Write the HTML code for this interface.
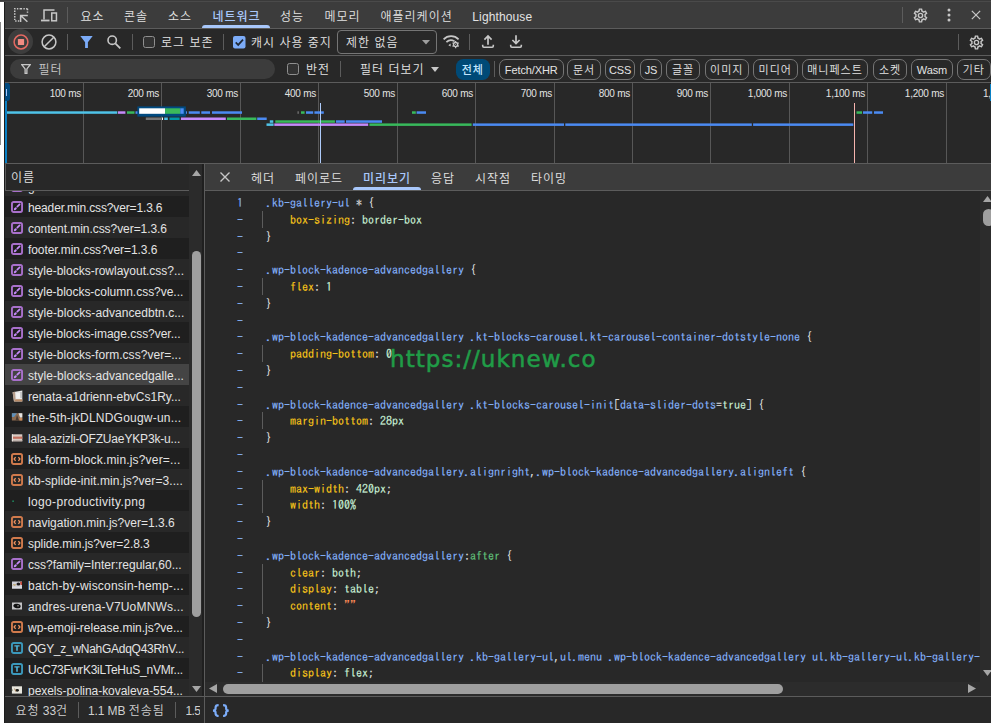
<!DOCTYPE html>
<html lang="ko"><head><meta charset="utf-8"><title>DevTools</title>
<style>
*{box-sizing:border-box;margin:0;padding:0}
html,body{width:991px;height:723px;overflow:hidden;background:#282828}
body{position:relative;font:12px "Liberation Sans","Noto Sans CJK KR",sans-serif;color:#e3e3e3;-webkit-font-smoothing:antialiased}
.abs{position:absolute}
.ko{font-family:"Liberation Sans","Noto Sans CJK KR",sans-serif;font-size:12px;font-weight:350;letter-spacing:1px;white-space:nowrap;line-height:16px;margin-top:0.5px}
.la{font-family:"Liberation Sans",sans-serif;font-size:12px;white-space:nowrap;line-height:16px;letter-spacing:-0.2px}
.n{letter-spacing:-0.1px}
.sep{position:absolute;width:1px;background:#5c5c5c}
.hl{position:absolute;height:1px;background:#5c5c5c;left:5px;right:0}
.tab{position:absolute;top:8px;color:#e3e3e3}
.pill{position:absolute;top:59px;height:21px;border:1px solid #757575;border-radius:7px;text-align:center;line-height:21px;color:#e3e3e3}
.pill.ko{font-size:11px;margin-top:0}.pill.la{font-size:11px;letter-spacing:-0.1px}
.row{position:absolute;left:5px;width:184px;height:21px;overflow:hidden}
.row .ic{position:absolute;left:6px;top:4.5px;width:12px;height:12px}
.row span{position:absolute;left:23px;top:3.6px;white-space:pre;font:12px/16px "Liberation Sans",sans-serif;color:#e3e3e3}
.d{background:#1f1f1f}
.code{position:absolute;left:205px;top:191px;width:775px;height:491px;overflow:hidden;background:#282828}
.ln{position:absolute;left:0;height:16.8px;width:774px;font:12px/16.8px "IPAGothic","Liberation Mono",monospace;white-space:pre;-webkit-text-stroke:0.12px}
.ln i{font-style:normal;position:absolute;left:20px;width:18px;text-align:right;color:#86b0f2}
.ln b{font-weight:normal;position:absolute;left:61px}
.s{color:#86b4ff}.p{color:#fcc818}.v{color:#ccf3d8}.q{color:#fe8d59}.g{color:#62c37c}.w{color:#dcdcdc}
.gd{position:absolute;left:57px;width:1px;background:#5c5c5c}
</style></head><body>

<div class="abs" style="left:0;top:0;width:4px;height:723px;background:#fff"></div>
<div class="abs" style="left:0;top:22px;width:1px;height:123px;background:#8a8a8a"></div>
<div class="abs" style="left:4px;top:0;width:1px;height:723px;background:#1d1d1d"></div>
<div class="abs" style="left:0;top:0;width:991px;height:1px;background:#3a3a3a"></div>
<div class="abs" style="left:0;top:1px;width:991px;height:1px;background:#4a4a4a"></div>
<div class="abs" style="left:5px;top:2px;width:986px;height:26px;background:#3c3c3c"></div>
<div class="hl" style="top:28px"></div>
<div class="hl" style="top:55px"></div>
<div class="hl" style="top:82px"></div>
<svg class="abs" style="left:13px;top:7px" width="16" height="16" viewBox="0 0 16 16"><path d="M8 1.75 H1.75 V14 H7" fill="none" stroke="#c7c7c7" stroke-width="1.5" stroke-dasharray="1.4 1.3"/><path d="M14.5 1.75 H8 M14.5 1.75 V7" fill="none" stroke="#c7c7c7" stroke-width="1.5" stroke-dasharray="1.4 1.3"/><path d="M7.6 15 V8.5 H14.8 M7.9 8.8 L14.4 14.8" fill="none" stroke="#c7c7c7" stroke-width="1.5"/></svg>
<svg class="abs" style="left:40px;top:7.5px" width="18" height="16" viewBox="0 0 18 16"><path d="M14.5 2 H4 V11.5" fill="none" stroke="#c7c7c7" stroke-width="1.5"/><path d="M1 12.5 H9.5" stroke="#c7c7c7" stroke-width="1.8"/><rect x="11.75" y="5" width="4.7" height="7.8" fill="none" stroke="#c7c7c7" stroke-width="1.5"/></svg>
<div class="sep" style="left:67px;top:7px;height:16px"></div>
<div class="tab ko" style="left:80.5px">요소</div>
<div class="tab ko" style="left:124px">콘솔</div>
<div class="tab ko" style="left:168px">소스</div>
<div class="tab ko" style="left:212.5px;color:#a8c7fa;font-weight:500">네트워크</div>
<div class="tab ko" style="left:280px">성능</div>
<div class="tab ko" style="left:324.5px">메모리</div>
<div class="tab ko" style="left:380.5px">애플리케이션</div>
<div class="tab la" style="left:472.3px;top:9px;font-size:12px;letter-spacing:0.12px">Lighthouse</div>
<div class="abs" style="left:202px;top:25px;width:68px;height:3px;background:#a8c7fa;border-radius:3px 3px 0 0"></div>
<div class="sep" style="left:902px;top:7px;height:16px"></div>
<svg class="abs" style="left:912.3px;top:6.5px" width="17" height="17" viewBox="0 0 24 24"><path fill="#c7c7c7" fill-rule="evenodd" d="M19.43 12.98c.04-.32.07-.64.07-.98s-.03-.66-.07-.98l2.11-1.65a.5.5 0 0 0 .12-.64l-2-3.46a.5.5 0 0 0-.61-.22l-2.49 1a7.3 7.3 0 0 0-1.69-.98l-.38-2.65A.49.49 0 0 0 14 2h-4a.49.49 0 0 0-.49.42l-.38 2.65c-.61.25-1.17.59-1.69.98l-2.49-1a.49.49 0 0 0-.61.22l-2 3.46a.49.49 0 0 0 .12.64l2.11 1.65c-.04.32-.07.65-.07.98s.03.66.07.98l-2.11 1.65a.5.5 0 0 0-.12.64l2 3.46c.12.22.39.3.61.22l2.49-1c.52.4 1.08.73 1.69.98l.38 2.65c.03.24.24.42.49.42h4c.25 0 .46-.18.49-.42l.38-2.65c.61-.25 1.17-.59 1.69-.98l2.49 1c.23.09.49 0 .61-.22l2-3.46a.5.5 0 0 0-.12-.64l-2.11-1.65zM17.45 11.27c.04.31.05.52.05.73s-.02.43-.05.73l-.14 1.13.89.7 1.08.84-.7 1.21-1.27-.51-1.04-.42-.9.68c-.43.32-.84.56-1.25.73l-1.06.43-.16 1.13-.2 1.35h-1.4l-.19-1.35-.16-1.13-1.06-.43c-.43-.18-.83-.41-1.23-.71l-.91-.7-1.06.43-1.27.51-.7-1.21 1.08-.84.89-.7-.14-1.13c-.03-.31-.05-.54-.05-.74s.02-.43.05-.73l.14-1.13-.89-.7-1.08-.84.7-1.21 1.27.51 1.04.42.9-.68c.43-.32.84-.56 1.25-.73l1.06-.43.16-1.13.2-1.35h1.39l.19 1.35.16 1.13 1.06.43c.43.18.83.41 1.23.71l.91.7 1.06-.43 1.27-.51.7 1.21-1.07.85-.89.7.14 1.13zM12 8a4 4 0 1 0 0 8 4 4 0 0 0 0-8zm0 6a2 2 0 1 1 0-4 2 2 0 0 1 0 4z"/></svg>
<svg class="abs" style="left:946px;top:7px" width="6" height="16" viewBox="0 0 6 16"><circle cx="3" cy="3" r="1.5" fill="#c7c7c7"/><circle cx="3" cy="8" r="1.5" fill="#c7c7c7"/><circle cx="3" cy="13" r="1.5" fill="#c7c7c7"/></svg>
<svg class="abs" style="left:971px;top:10px" width="10" height="10" viewBox="0 0 12 12"><path d="M1 1 L11 11 M11 1 L1 11" stroke="#c7c7c7" stroke-width="1.5"/></svg>
<div class="abs" style="left:8px;top:29px;width:25px;height:25px;border-radius:50%;background:#3d3d3d"></div>
<svg class="abs" style="left:13px;top:34px" width="16" height="16" viewBox="0 0 16 16"><circle cx="8" cy="8" r="6.9" fill="none" stroke="#e46962" stroke-width="1.5"/><rect x="4.9" y="4.9" width="6.2" height="6.2" rx="0.6" fill="#f28b82"/></svg>
<svg class="abs" style="left:41px;top:34px" width="16" height="16" viewBox="0 0 16 16"><circle cx="8" cy="8" r="6.9" fill="none" stroke="#c7c7c7" stroke-width="1.5"/><path d="M3.2 12.8 L12.8 3.2" stroke="#c7c7c7" stroke-width="1.5"/></svg>
<div class="sep" style="left:67px;top:34px;height:16px"></div>
<svg class="abs" style="left:80px;top:36px" width="13" height="12" viewBox="0 0 13 12"><path d="M0.3 0 H12.7 L7.9 6.2 V12 H5.1 V6.2 Z" fill="#7cacf8"/></svg>
<svg class="abs" style="left:106px;top:34px" width="16" height="16" viewBox="0 0 16 16"><circle cx="6.2" cy="6.2" r="4.2" fill="none" stroke="#c7c7c7" stroke-width="1.6"/><path d="M9.3 9.3 L14.3 14.3" stroke="#c7c7c7" stroke-width="1.8"/></svg>
<div class="sep" style="left:132px;top:34px;height:16px"></div>
<div class="abs" style="left:143px;top:36px;width:12px;height:12px;border:1px solid #8f8f8f;border-radius:2.5px;background:#323232"></div>
<div class="abs ko" style="left:161px;top:34px">로그 보존</div>
<div class="sep" style="left:222.5px;top:34px;height:16px"></div>
<svg class="abs" style="left:232.6px;top:36px" width="13" height="13" viewBox="0 0 13 13"><rect x="0" y="0" width="12.5" height="12.5" rx="2" fill="#7cacf8"/><path d="M2.7 6.4 L5.2 8.9 L10 3.6" fill="none" stroke="#1f2937" stroke-width="1.7"/></svg>
<div class="abs ko" style="left:251px;top:34px">캐시 사용 중지</div>
<div class="abs" style="left:337px;top:30px;width:100px;height:24px;border:1px solid #757575;border-radius:4px"></div>
<div class="abs ko" style="left:346px;top:34px">제한 없음</div>
<svg class="abs" style="left:422px;top:40px" width="8" height="5" viewBox="0 0 8 5"><path d="M0 0 H8 L4 4.6 Z" fill="#9e9e9e"/></svg>
<svg class="abs" style="left:442px;top:33px" width="18" height="16" viewBox="0 0 18 16"><path d="M1.6 6.3 A10.5 10.5 0 0 1 16.6 6.3" fill="none" stroke="#c7c7c7" stroke-width="1.7"/><path d="M4.4 9.2 A6.6 6.6 0 0 1 12.6 8.4" fill="none" stroke="#c7c7c7" stroke-width="1.7"/><path d="M6.4 12.2 L8.6 10.6 V13.4 Z" fill="#c7c7c7"/><circle cx="13.6" cy="11.6" r="2" fill="none" stroke="#c7c7c7" stroke-width="1.5"/><path d="M13.6 8 V15.2 M10.5 9.8 L16.7 13.4 M10.5 13.4 L16.7 9.8" stroke="#c7c7c7" stroke-width="1.3"/><circle cx="13.6" cy="11.6" r="1.3" fill="#282828"/><circle cx="13.6" cy="11.6" r="0.5" fill="#c7c7c7"/></svg>
<div class="sep" style="left:469px;top:34px;height:16px"></div>
<svg class="abs" style="left:481.2px;top:34px" width="14" height="15" viewBox="0 0 14 15"><path d="M7 10.8 V2 M3.4 5.6 L7 2 L10.6 5.6" fill="none" stroke="#c7c7c7" stroke-width="1.7"/><path d="M1.7 10.8 V12 Q1.7 13.2 2.9 13.2 H11.1 Q12.3 13.2 12.3 12 V10.8" fill="none" stroke="#c7c7c7" stroke-width="1.6"/></svg>
<svg class="abs" style="left:509px;top:34px" width="14" height="15" viewBox="0 0 14 15"><path d="M7 1.3 V9.6 M3.4 6 L7 9.6 L10.6 6" fill="none" stroke="#c7c7c7" stroke-width="1.7"/><path d="M1.7 10.8 V12 Q1.7 13.2 2.9 13.2 H11.1 Q12.3 13.2 12.3 12 V10.8" fill="none" stroke="#c7c7c7" stroke-width="1.6"/></svg>
<div class="sep" style="left:958px;top:34px;height:16px"></div>
<svg class="abs" style="left:967.5px;top:33.5px" width="17" height="17" viewBox="0 0 24 24"><path fill="#c7c7c7" fill-rule="evenodd" d="M19.43 12.98c.04-.32.07-.64.07-.98s-.03-.66-.07-.98l2.11-1.65a.5.5 0 0 0 .12-.64l-2-3.46a.5.5 0 0 0-.61-.22l-2.49 1a7.3 7.3 0 0 0-1.69-.98l-.38-2.65A.49.49 0 0 0 14 2h-4a.49.49 0 0 0-.49.42l-.38 2.65c-.61.25-1.17.59-1.69.98l-2.49-1a.49.49 0 0 0-.61.22l-2 3.46a.49.49 0 0 0 .12.64l2.11 1.65c-.04.32-.07.65-.07.98s.03.66.07.98l-2.11 1.65a.5.5 0 0 0-.12.64l2 3.46c.12.22.39.3.61.22l2.49-1c.52.4 1.08.73 1.69.98l.38 2.65c.03.24.24.42.49.42h4c.25 0 .46-.18.49-.42l.38-2.65c.61-.25 1.17-.59 1.69-.98l2.49 1c.23.09.49 0 .61-.22l2-3.46a.5.5 0 0 0-.12-.64l-2.11-1.65zM17.45 11.27c.04.31.05.52.05.73s-.02.43-.05.73l-.14 1.13.89.7 1.08.84-.7 1.21-1.27-.51-1.04-.42-.9.68c-.43.32-.84.56-1.25.73l-1.06.43-.16 1.13-.2 1.35h-1.4l-.19-1.35-.16-1.13-1.06-.43c-.43-.18-.83-.41-1.23-.71l-.91-.7-1.06.43-1.27.51-.7-1.21 1.08-.84.89-.7-.14-1.13c-.03-.31-.05-.54-.05-.74s.02-.43.05-.73l.14-1.13-.89-.7-1.08-.84.7-1.21 1.27.51 1.04.42.9-.68c.43-.32.84-.56 1.25-.73l1.06-.43.16-1.13.2-1.35h1.39l.19 1.35.16 1.13 1.06.43c.43.18.83.41 1.23.71l.91.7 1.06-.43 1.27-.51.7 1.21-1.07.85-.89.7.14 1.13zM12 8a4 4 0 1 0 0 8 4 4 0 0 0 0-8zm0 6a2 2 0 1 1 0-4 2 2 0 0 1 0 4z"/></svg>
<div class="abs" style="left:10px;top:59px;width:265px;height:20px;border-radius:10px;background:#3c3c3c"></div>
<svg class="abs" style="left:21px;top:64px" width="10" height="10" viewBox="0 0 10 10"><path d="M0.8 0.7 H9.2 L5.9 4.9 V9.3 H4.1 V4.9 Z" fill="none" stroke="#c7c7c7" stroke-width="1.3"/></svg>
<div class="abs ko" style="left:38.5px;top:61px;color:#c7c7c7">필터</div>
<div class="abs" style="left:287px;top:63px;width:12px;height:12px;border:1px solid #8f8f8f;border-radius:2.5px;background:#323232"></div>
<div class="abs ko" style="left:306px;top:61px">반전</div>
<div class="sep" style="left:340px;top:61px;height:16px"></div>
<div class="abs ko" style="left:360px;top:61px">필터 더보기</div>
<svg class="abs" style="left:431px;top:67px" width="8" height="5" viewBox="0 0 8 5"><path d="M0 0 H8 L4 5 Z" fill="#c7c7c7"/></svg>
<div class="abs ko" style="left:455.5px;top:59px;width:34.5px;height:21px;border-radius:7.5px;background:#004a77;color:#c2e7ff;text-align:center;line-height:22px;font-weight:500;font-size:11px;margin-top:0">전체</div>
<div class="sep" style="left:494px;top:61px;height:16px"></div>
<div class="pill la" style="left:499px;width:64.5px">Fetch/XHR</div>
<div class="pill ko" style="left:567px;width:34px">문서</div>
<div class="pill la" style="left:604.8px;width:30.7px">CSS</div>
<div class="pill la" style="left:640px;width:22px">JS</div>
<div class="pill ko" style="left:666px;width:34px">글꼴</div>
<div class="pill ko" style="left:704.5px;width:44.5px">이미지</div>
<div class="pill ko" style="left:753px;width:44.5px">미디어</div>
<div class="pill ko" style="left:802px;width:66px">매니페스트</div>
<div class="pill ko" style="left:873px;width:34px">소켓</div>
<div class="pill la" style="left:911px;width:42px">Wasm</div>
<div class="pill ko" style="left:957px;width:33.5px">기타</div>
<div class="sep" style="left:83.0px;top:83px;height:80px;background:#575757"></div>
<div class="sep" style="left:161.0px;top:83px;height:80px;background:#575757"></div>
<div class="sep" style="left:240.0px;top:83px;height:80px;background:#575757"></div>
<div class="sep" style="left:318.0px;top:83px;height:80px;background:#575757"></div>
<div class="sep" style="left:397.0px;top:83px;height:80px;background:#575757"></div>
<div class="sep" style="left:475.0px;top:83px;height:80px;background:#575757"></div>
<div class="sep" style="left:554.0px;top:83px;height:80px;background:#575757"></div>
<div class="sep" style="left:632.0px;top:83px;height:80px;background:#575757"></div>
<div class="sep" style="left:710.0px;top:83px;height:80px;background:#575757"></div>
<div class="sep" style="left:789.0px;top:83px;height:80px;background:#575757"></div>
<div class="sep" style="left:867.0px;top:83px;height:80px;background:#575757"></div>
<div class="sep" style="left:946.0px;top:83px;height:80px;background:#575757"></div>
<div class="abs la" style="left:11.0px;width:70px;top:85.5px;text-align:right;font-size:10px;letter-spacing:-0.25px">100 ms</div>
<div class="abs la" style="left:89.0px;width:70px;top:85.5px;text-align:right;font-size:10px;letter-spacing:-0.25px">200 ms</div>
<div class="abs la" style="left:168.0px;width:70px;top:85.5px;text-align:right;font-size:10px;letter-spacing:-0.25px">300 ms</div>
<div class="abs la" style="left:246.0px;width:70px;top:85.5px;text-align:right;font-size:10px;letter-spacing:-0.25px">400 ms</div>
<div class="abs la" style="left:325.0px;width:70px;top:85.5px;text-align:right;font-size:10px;letter-spacing:-0.25px">500 ms</div>
<div class="abs la" style="left:403.0px;width:70px;top:85.5px;text-align:right;font-size:10px;letter-spacing:-0.25px">600 ms</div>
<div class="abs la" style="left:482.0px;width:70px;top:85.5px;text-align:right;font-size:10px;letter-spacing:-0.25px">700 ms</div>
<div class="abs la" style="left:560.0px;width:70px;top:85.5px;text-align:right;font-size:10px;letter-spacing:-0.25px">800 ms</div>
<div class="abs la" style="left:638.0px;width:70px;top:85.5px;text-align:right;font-size:10px;letter-spacing:-0.25px">900 ms</div>
<div class="abs la" style="left:717.0px;width:70px;top:85.5px;text-align:right;font-size:10px;letter-spacing:-0.25px">1,000 ms</div>
<div class="abs la" style="left:795.0px;width:70px;top:85.5px;text-align:right;font-size:10px;letter-spacing:-0.25px">1,100 ms</div>
<div class="abs la" style="left:874.0px;width:70px;top:85.5px;text-align:right;font-size:10px;letter-spacing:-0.25px">1,200 ms</div>
<div class="abs la" style="left:983px;top:85.5px;font-size:10px">1,300 ms</div>
<div class="hl" style="top:163px"></div>
<div class="abs" style="left:5px;top:85px;width:2px;height:78px;background:#0a80c4"></div>
<div class="abs" style="left:5px;top:83px;width:5px;height:18px;border-radius:0 3px 3px 0;background:#004a80"></div>
<div class="abs" style="left:6px;top:89px;width:1.2px;height:7px;background:#a8c7fa"></div>
<div class="abs" style="left:990px;top:84px;width:1px;height:17px;background:#0a80c4"></div>
<svg class="abs" style="left:0;top:0" width="991" height="170" viewBox="0 0 991 170">
<rect x="7.0" y="111.3" width="110.3" height="2.5" fill="#4fc3e8"/>
<rect x="118.0" y="111.3" width="7.4" height="2.5" fill="#c58af9"/>
<rect x="127.0" y="111.3" width="7.5" height="2.5" fill="#38b95b"/>
<rect x="135.5" y="111.3" width="2.5" height="2.5" fill="#4b8af2"/>
<rect x="137.4" y="106.4" width="48.4" height="10.2" fill="#004a80"/>
<rect x="139.2" y="108.3" width="25.9" height="5.5" fill="#ffffff"/>
<rect x="165.1" y="108.3" width="15.2" height="5.5" fill="#3cb95b"/>
<rect x="180.3" y="108.3" width="3.4" height="5.5" fill="#4d8df6"/>
<rect x="186.0" y="111.3" width="1.0" height="2.5" fill="#4b8af2"/>
<rect x="188.7" y="111.3" width="11.1" height="2.5" fill="#4b8af2"/>
<rect x="201.3" y="111.3" width="8.7" height="2.5" fill="#4b8af2"/>
<rect x="212.0" y="111.3" width="30.0" height="2.5" fill="#4b8af2"/>
<rect x="297.5" y="111.3" width="1.3" height="2.5" fill="#757575"/>
<rect x="301.0" y="111.3" width="3.6" height="2.5" fill="#38b95b"/>
<rect x="306.0" y="111.3" width="7.2" height="2.5" fill="#4b8af2"/>
<rect x="314.4" y="111.3" width="9.4" height="2.5" fill="#4b8af2"/>
<rect x="412.0" y="111.3" width="3.8" height="2.5" fill="#38b95b"/>
<rect x="416.6" y="111.3" width="9.4" height="2.5" fill="#4b8af2"/>
<rect x="856.5" y="111.3" width="5.5" height="2.5" fill="#38b95b"/>
<rect x="863.0" y="111.3" width="9.2" height="2.5" fill="#4b8af2"/>
<rect x="874.0" y="111.3" width="9.0" height="2.5" fill="#4b8af2"/>
<rect x="145.8" y="117.5" width="15.7" height="2.5" fill="#757575"/>
<rect x="162.0" y="117.5" width="1.0" height="2.5" fill="#fff"/>
<rect x="164.2" y="117.5" width="3.6" height="2.5" fill="#4fc3e8"/>
<rect x="169.5" y="117.5" width="10.1" height="2.5" fill="#0097a7"/>
<rect x="180.9" y="117.5" width="44.9" height="2.5" fill="#c58af9"/>
<rect x="227.0" y="117.5" width="29.4" height="2.5" fill="#38b95b"/>
<rect x="257.2" y="117.5" width="9.5" height="2.5" fill="#4b8af2"/>
<rect x="269.8" y="120.3" width="3.5" height="2.5" fill="#4fc3e8"/>
<rect x="275.3" y="120.3" width="59.6" height="2.5" fill="#38b95b"/>
<rect x="335.9" y="120.3" width="8.8" height="2.5" fill="#4b8af2"/>
<rect x="346.0" y="120.3" width="36.0" height="2.5" fill="#4b8af2"/>
<rect x="266.5" y="123.4" width="7.1" height="2.5" fill="#4fc3e8"/>
<rect x="274.3" y="123.4" width="93.9" height="2.5" fill="#c58af9"/>
<rect x="369.4" y="123.4" width="102.2" height="2.5" fill="#38b95b"/>
<rect x="472.8" y="123.4" width="91.2" height="2.5" fill="#4b8af2"/>
<rect x="565.3" y="123.4" width="186.5" height="2.5" fill="#4b8af2"/>
<rect x="753.1" y="123.4" width="100.2" height="2.5" fill="#4b8af2"/>
</svg>
<div class="abs" style="left:319.8px;top:103px;width:1.5px;height:60px;background:#aecbfa"></div>
<div class="abs" style="left:853.8px;top:103px;width:1.4px;height:60px;background:#f6b4ae"></div>
<div class="row" style="top:175px"><svg class="ic" viewBox="0 0 12 12"><rect x="0.95" y="0.95" width="10.1" height="10.1" rx="1.7" fill="none" stroke="#a870cb" stroke-width="1.9"/><path d="M8.6 3.4 L6.3 5.7" stroke="#c58af9" stroke-width="1.7" stroke-linecap="round"/><ellipse cx="4.3" cy="7.7" rx="1.7" ry="1.15" transform="rotate(-45 4.3 7.7)" fill="#c58af9"/></svg><span style="letter-spacing:-0.02px">global.min.css?ver=1.3.6</span></div>
<div class="row d" style="top:196px"><svg class="ic" viewBox="0 0 12 12"><rect x="0.95" y="0.95" width="10.1" height="10.1" rx="1.7" fill="none" stroke="#a870cb" stroke-width="1.9"/><path d="M8.6 3.4 L6.3 5.7" stroke="#c58af9" stroke-width="1.7" stroke-linecap="round"/><ellipse cx="4.3" cy="7.7" rx="1.7" ry="1.15" transform="rotate(-45 4.3 7.7)" fill="#c58af9"/></svg><span style="letter-spacing:-0.14px">header.min.css?ver=1.3.6</span></div>
<div class="row" style="top:217px"><svg class="ic" viewBox="0 0 12 12"><rect x="0.95" y="0.95" width="10.1" height="10.1" rx="1.7" fill="none" stroke="#a870cb" stroke-width="1.9"/><path d="M8.6 3.4 L6.3 5.7" stroke="#c58af9" stroke-width="1.7" stroke-linecap="round"/><ellipse cx="4.3" cy="7.7" rx="1.7" ry="1.15" transform="rotate(-45 4.3 7.7)" fill="#c58af9"/></svg><span style="letter-spacing:-0.057px">content.min.css?ver=1.3.6</span></div>
<div class="row d" style="top:238px"><svg class="ic" viewBox="0 0 12 12"><rect x="0.95" y="0.95" width="10.1" height="10.1" rx="1.7" fill="none" stroke="#a870cb" stroke-width="1.9"/><path d="M8.6 3.4 L6.3 5.7" stroke="#c58af9" stroke-width="1.7" stroke-linecap="round"/><ellipse cx="4.3" cy="7.7" rx="1.7" ry="1.15" transform="rotate(-45 4.3 7.7)" fill="#c58af9"/></svg><span style="letter-spacing:-0.074px">footer.min.css?ver=1.3.6</span></div>
<div class="row" style="top:259px"><svg class="ic" viewBox="0 0 12 12"><rect x="0.95" y="0.95" width="10.1" height="10.1" rx="1.7" fill="none" stroke="#a870cb" stroke-width="1.9"/><path d="M8.6 3.4 L6.3 5.7" stroke="#c58af9" stroke-width="1.7" stroke-linecap="round"/><ellipse cx="4.3" cy="7.7" rx="1.7" ry="1.15" transform="rotate(-45 4.3 7.7)" fill="#c58af9"/></svg><span style="letter-spacing:-0.002px">style-blocks-rowlayout.css?...</span></div>
<div class="row d" style="top:280px"><svg class="ic" viewBox="0 0 12 12"><rect x="0.95" y="0.95" width="10.1" height="10.1" rx="1.7" fill="none" stroke="#a870cb" stroke-width="1.9"/><path d="M8.6 3.4 L6.3 5.7" stroke="#c58af9" stroke-width="1.7" stroke-linecap="round"/><ellipse cx="4.3" cy="7.7" rx="1.7" ry="1.15" transform="rotate(-45 4.3 7.7)" fill="#c58af9"/></svg><span style="letter-spacing:-0.026px">style-blocks-column.css?ve...</span></div>
<div class="row" style="top:301px"><svg class="ic" viewBox="0 0 12 12"><rect x="0.95" y="0.95" width="10.1" height="10.1" rx="1.7" fill="none" stroke="#a870cb" stroke-width="1.9"/><path d="M8.6 3.4 L6.3 5.7" stroke="#c58af9" stroke-width="1.7" stroke-linecap="round"/><ellipse cx="4.3" cy="7.7" rx="1.7" ry="1.15" transform="rotate(-45 4.3 7.7)" fill="#c58af9"/></svg><span style="letter-spacing:0.057px">style-blocks-advancedbtn.c...</span></div>
<div class="row d" style="top:322px"><svg class="ic" viewBox="0 0 12 12"><rect x="0.95" y="0.95" width="10.1" height="10.1" rx="1.7" fill="none" stroke="#a870cb" stroke-width="1.9"/><path d="M8.6 3.4 L6.3 5.7" stroke="#c58af9" stroke-width="1.7" stroke-linecap="round"/><ellipse cx="4.3" cy="7.7" rx="1.7" ry="1.15" transform="rotate(-45 4.3 7.7)" fill="#c58af9"/></svg><span style="letter-spacing:-0.027px">style-blocks-image.css?ver...</span></div>
<div class="row" style="top:343px"><svg class="ic" viewBox="0 0 12 12"><rect x="0.95" y="0.95" width="10.1" height="10.1" rx="1.7" fill="none" stroke="#a870cb" stroke-width="1.9"/><path d="M8.6 3.4 L6.3 5.7" stroke="#c58af9" stroke-width="1.7" stroke-linecap="round"/><ellipse cx="4.3" cy="7.7" rx="1.7" ry="1.15" transform="rotate(-45 4.3 7.7)" fill="#c58af9"/></svg><span style="letter-spacing:0.032px">style-blocks-form.css?ver=...</span></div>
<div class="row d" style="top:364px;background:#444"><svg class="ic" viewBox="0 0 12 12"><rect x="0.95" y="0.95" width="10.1" height="10.1" rx="1.7" fill="none" stroke="#a870cb" stroke-width="1.9"/><path d="M8.6 3.4 L6.3 5.7" stroke="#c58af9" stroke-width="1.7" stroke-linecap="round"/><ellipse cx="4.3" cy="7.7" rx="1.7" ry="1.15" transform="rotate(-45 4.3 7.7)" fill="#c58af9"/></svg><span style="letter-spacing:0.066px">style-blocks-advancedgalle...</span></div>
<div class="row" style="top:385px"><svg class="ic" viewBox="0 0 12 12"><path d="M1.6 2.2 L11.3 0.5 V11.6 H3 Z" fill="#e6e6e6"/><path d="M1.6 2.2 L4 1.8 L4.6 9.5 L3 11.6 Z" fill="#b79f8c"/><path d="M3 11.6 L4.6 9.3 H11.3 V11.6 Z" fill="#b88a66"/><rect x="5.2" y="3" width="4.6" height="5.6" fill="#f2f2f2"/><rect x="9.6" y="2" width="0.8" height="6" fill="#9a9a9a"/></svg><span style="letter-spacing:-0.011px">renata-a1drienn-ebvCs1Ry...</span></div>
<div class="row d" style="top:406px"><svg class="ic" viewBox="0 0 12 12"><rect x="0.9" y="2.2" width="10.4" height="7.3" fill="#8a6a50"/><path d="M0.9 2.2 H6 L3 6 H0.9 Z" fill="#5f8fb8"/><path d="M7.5 2.2 H11.3 V6.5 H9 Z" fill="#e4e4e4"/><path d="M4.5 9.5 L6 4 L8 9.5 Z" fill="#4a3a30"/><rect x="8.5" y="7" width="2.8" height="2.5" fill="#c98a5a"/></svg><span style="letter-spacing:0.209px">the-5th-jkDLNDGougw-un...</span></div>
<div class="row" style="top:427px"><svg class="ic" viewBox="0 0 12 12"><rect x="0.9" y="2.3" width="10.4" height="7" fill="#d9cbc4"/><rect x="2" y="4.6" width="9.3" height="2.2" fill="#c4705f"/><rect x="0.9" y="8" width="10.4" height="1.3" fill="#bfb3ad"/><rect x="0.9" y="2.3" width="1.1" height="7" fill="#e9e2dd"/></svg><span style="letter-spacing:-0.165px">lala-azizli-OFZUaeYKP3k-u...</span></div>
<div class="row d" style="top:448px"><svg class="ic" viewBox="0 0 12 12"><rect x="0.95" y="0.95" width="10.1" height="10.1" rx="1.7" fill="none" stroke="#d07a4c" stroke-width="1.9"/><path d="M4.6 4.2 L3.1 6 L4.6 7.8 M7.4 4.2 L8.9 6 L7.4 7.8" stroke="#f0935f" stroke-width="1.3" fill="none"/></svg><span style="letter-spacing:0.171px">kb-form-block.min.js?ver=...</span></div>
<div class="row" style="top:469px"><svg class="ic" viewBox="0 0 12 12"><rect x="0.95" y="0.95" width="10.1" height="10.1" rx="1.7" fill="none" stroke="#d07a4c" stroke-width="1.9"/><path d="M4.6 4.2 L3.1 6 L4.6 7.8 M7.4 4.2 L8.9 6 L7.4 7.8" stroke="#f0935f" stroke-width="1.3" fill="none"/></svg><span style="letter-spacing:0.081px">kb-splide-init.min.js?ver=3....</span></div>
<div class="row d" style="top:490px"><svg class="ic" viewBox="0 0 12 12"><rect x="1.2" y="5.6" width="1.8" height="1.2" rx="0.5" fill="#1f9d6b"/></svg><span style="letter-spacing:0.355px">logo-productivity.png</span></div>
<div class="row" style="top:511px"><svg class="ic" viewBox="0 0 12 12"><rect x="0.95" y="0.95" width="10.1" height="10.1" rx="1.7" fill="none" stroke="#d07a4c" stroke-width="1.9"/><path d="M4.6 4.2 L3.1 6 L4.6 7.8 M7.4 4.2 L8.9 6 L7.4 7.8" stroke="#f0935f" stroke-width="1.3" fill="none"/></svg><span style="letter-spacing:0.014px">navigation.min.js?ver=1.3.6</span></div>
<div class="row d" style="top:532px"><svg class="ic" viewBox="0 0 12 12"><rect x="0.95" y="0.95" width="10.1" height="10.1" rx="1.7" fill="none" stroke="#d07a4c" stroke-width="1.9"/><path d="M4.6 4.2 L3.1 6 L4.6 7.8 M7.4 4.2 L8.9 6 L7.4 7.8" stroke="#f0935f" stroke-width="1.3" fill="none"/></svg><span style="letter-spacing:-0.06px">splide.min.js?ver=2.8.3</span></div>
<div class="row" style="top:553px"><svg class="ic" viewBox="0 0 12 12"><rect x="0.95" y="0.95" width="10.1" height="10.1" rx="1.7" fill="none" stroke="#a870cb" stroke-width="1.9"/><path d="M8.6 3.4 L6.3 5.7" stroke="#c58af9" stroke-width="1.7" stroke-linecap="round"/><ellipse cx="4.3" cy="7.7" rx="1.7" ry="1.15" transform="rotate(-45 4.3 7.7)" fill="#c58af9"/></svg><span style="letter-spacing:-0.002px">css?family=Inter:regular,60...</span></div>
<div class="row d" style="top:574px"><svg class="ic" viewBox="0 0 12 12"><rect x="1" y="2.5" width="10" height="7" fill="#cfcfd6"/><ellipse cx="7.4" cy="5" rx="1.9" ry="1.6" fill="#1e1a1c"/><path d="M9 2.8 H11 V6 H9.6 Z" fill="#c8483a"/><path d="M2 6.5 L3 5.2 L3.8 6.6 L4.6 5.4" stroke="#b08a30" stroke-width="0.7" fill="none"/><rect x="1" y="7.8" width="10" height="1.7" fill="#dcdce2"/></svg><span style="letter-spacing:0.209px">batch-by-wisconsin-hemp-...</span></div>
<div class="row" style="top:595px"><svg class="ic" viewBox="0 0 12 12"><rect x="1" y="2.5" width="10" height="7" fill="#c4c4c6"/><ellipse cx="6" cy="6" rx="3.7" ry="2.2" fill="#111" transform="rotate(12 6 6)"/><rect x="6" y="5.4" width="2" height="0.9" rx="0.4" fill="#bdbdbd"/></svg><span style="letter-spacing:0.18px">andres-urena-V7UoMNWs...</span></div>
<div class="row d" style="top:616px"><svg class="ic" viewBox="0 0 12 12"><rect x="0.95" y="0.95" width="10.1" height="10.1" rx="1.7" fill="none" stroke="#d07a4c" stroke-width="1.9"/><path d="M4.6 4.2 L3.1 6 L4.6 7.8 M7.4 4.2 L8.9 6 L7.4 7.8" stroke="#f0935f" stroke-width="1.3" fill="none"/></svg><span style="letter-spacing:-0.017px">wp-emoji-release.min.js?ve...</span></div>
<div class="row" style="top:637px"><svg class="ic" viewBox="0 0 12 12"><rect x="0.95" y="0.95" width="10.1" height="10.1" rx="1.7" fill="none" stroke="#3b98bb" stroke-width="1.9"/><path d="M3.4 3.9 H8.6" stroke="#4fbde6" stroke-width="1.2" fill="none"/><path d="M6 3.9 V8.8" stroke="#4fbde6" stroke-width="1.5" fill="none"/></svg><span style="letter-spacing:-0.27px">QGY_z_wNahGAdqQ43RhV...</span></div>
<div class="row d" style="top:658px"><svg class="ic" viewBox="0 0 12 12"><rect x="0.95" y="0.95" width="10.1" height="10.1" rx="1.7" fill="none" stroke="#3b98bb" stroke-width="1.9"/><path d="M3.4 3.9 H8.6" stroke="#4fbde6" stroke-width="1.2" fill="none"/><path d="M6 3.9 V8.8" stroke="#4fbde6" stroke-width="1.5" fill="none"/></svg><span style="letter-spacing:-0.224px">UcC73FwrK3iLTeHuS_nVMr...</span></div>
<div class="row" style="top:679px"><svg class="ic" viewBox="0 0 12 12"><rect x="0.9" y="2.3" width="10.1" height="7.3" fill="#e7e5dc"/><ellipse cx="6.2" cy="6.3" rx="1.8" ry="1.4" fill="#1f1d18"/><path d="M3.6 4.6 L4.8 7.6" stroke="#a8845c" stroke-width="1"/><rect x="1" y="5.6" width="0.8" height="1" fill="#5e6b4a"/></svg><span style="letter-spacing:-0.041px">pexels-polina-kovaleva-554...</span></div>
<div class="abs" style="left:5px;top:163px;width:200px;height:28px;background:#282828;border:1px solid #5c5c5c;border-right:none"></div>
<div class="abs ko" style="left:11px;top:169px">이름</div>
<div class="abs" style="left:189px;top:164px;width:15px;height:532px;background:#2b2b2b"></div>
<svg class="abs" style="left:192px;top:170px" width="9" height="6" viewBox="0 0 9 6"><path d="M0 6 H9 L4.5 0 Z" fill="#a6a6a6"/></svg>
<svg class="abs" style="left:192px;top:686px" width="9" height="6" viewBox="0 0 9 6"><path d="M0 0 H9 L4.5 6 Z" fill="#a6a6a6"/></svg>
<div class="abs" style="left:192px;top:251px;width:9.2px;height:365.5px;border-radius:5px;background:#9f9f9f"></div>
<div class="abs" style="left:202.4px;top:164px;width:1.6px;height:532px;background:#1f1f1f"></div>
<div class="sep" style="left:204px;top:164px;height:559px"></div>
<div class="abs" style="left:205px;top:164px;width:786px;height:26px;background:#3c3c3c"></div>
<div class="abs" style="left:205px;top:190px;width:786px;height:1px;background:#5c5c5c"></div>
<svg class="abs" style="left:220px;top:172px" width="10" height="10" viewBox="0 0 10 10"><path d="M0.5 0.5 L9.5 9.5 M9.5 0.5 L0.5 9.5" stroke="#c7c7c7" stroke-width="1.4"/></svg>
<div class="abs ko" style="left:251px;top:170px">헤더</div>
<div class="abs ko" style="left:295px;top:170px">페이로드</div>
<div class="abs ko" style="left:363px;top:170px;color:#a8c7fa;font-weight:500">미리보기</div>
<div class="abs ko" style="left:431px;top:170px">응답</div>
<div class="abs ko" style="left:475px;top:170px">시작점</div>
<div class="abs ko" style="left:531px;top:170px">타이밍</div>
<div class="abs" style="left:353px;top:187px;width:68px;height:3px;background:#a8c7fa;border-radius:3px 3px 0 0"></div>
<div class="code">
<div class="ln" style="top:2.95px"><i>1</i><b><span class="s">.kb-gallery-ul</span><span class="w"> * {</span></b></div>
<div class="ln" style="top:19.75px"><i>-</i><b><span class="p">    box-sizing</span><span class="w">: </span><span class="v">border-box</span></b></div>
<div class="ln" style="top:36.55px"><i>-</i><b><span class="w">}</span></b></div>
<div class="ln" style="top:53.35px"><i>-</i><b></b></div>
<div class="ln" style="top:70.15px"><i>-</i><b><span class="s">.wp-block-kadence-advancedgallery</span><span class="w"> {</span></b></div>
<div class="ln" style="top:86.95px"><i>-</i><b><span class="p">    flex</span><span class="w">: </span><span class="v">1</span></b></div>
<div class="ln" style="top:103.75px"><i>-</i><b><span class="w">}</span></b></div>
<div class="ln" style="top:120.55px"><i>-</i><b></b></div>
<div class="ln" style="top:137.35px"><i>-</i><b><span class="s">.wp-block-kadence-advancedgallery .kt-blocks-carousel.kt-carousel-container-dotstyle-none</span><span class="w"> {</span></b></div>
<div class="ln" style="top:154.15px"><i>-</i><b><span class="p">    padding-bottom</span><span class="w">: </span><span class="v">0</span></b></div>
<div class="ln" style="top:170.95px"><i>-</i><b><span class="w">}</span></b></div>
<div class="ln" style="top:187.75px"><i>-</i><b></b></div>
<div class="ln" style="top:204.55px"><i>-</i><b><span class="s">.wp-block-kadence-advancedgallery .kt-blocks-carousel-init</span><span class="w">[</span><span class="s">data-slider-dots</span><span class="w">=</span><span class="v">true</span><span class="w">] {</span></b></div>
<div class="ln" style="top:221.35px"><i>-</i><b><span class="p">    margin-bottom</span><span class="w">: </span><span class="v">28px</span></b></div>
<div class="ln" style="top:238.15px"><i>-</i><b><span class="w">}</span></b></div>
<div class="ln" style="top:254.95px"><i>-</i><b></b></div>
<div class="ln" style="top:271.75px"><i>-</i><b><span class="s">.wp-block-kadence-advancedgallery.alignright</span><span class="w">,</span><span class="s">.wp-block-kadence-advancedgallery.alignleft</span><span class="w"> {</span></b></div>
<div class="ln" style="top:288.55px"><i>-</i><b><span class="p">    max-width</span><span class="w">: </span><span class="v">420px</span><span class="w">;</span></b></div>
<div class="ln" style="top:305.35px"><i>-</i><b><span class="p">    width</span><span class="w">: </span><span class="v">100%</span></b></div>
<div class="ln" style="top:322.15px"><i>-</i><b><span class="w">}</span></b></div>
<div class="ln" style="top:338.95px"><i>-</i><b></b></div>
<div class="ln" style="top:355.75px"><i>-</i><b><span class="s">.wp-block-kadence-advancedgallery</span><span class="w">:</span><span class="g">after</span><span class="w"> {</span></b></div>
<div class="ln" style="top:372.55px"><i>-</i><b><span class="p">    clear</span><span class="w">: </span><span class="v">both</span><span class="w">;</span></b></div>
<div class="ln" style="top:389.35px"><i>-</i><b><span class="p">    display</span><span class="w">: </span><span class="v">table</span><span class="w">;</span></b></div>
<div class="ln" style="top:406.15px"><i>-</i><b><span class="p">    content</span><span class="w">: </span><span class="q">&quot;&quot;</span></b></div>
<div class="ln" style="top:422.95px"><i>-</i><b><span class="w">}</span></b></div>
<div class="ln" style="top:439.75px"><i>-</i><b></b></div>
<div class="ln" style="top:456.55px"><i>-</i><b><span class="s">.wp-block-kadence-advancedgallery .kb-gallery-ul</span><span class="w">,</span><span class="s">ul.menu .wp-block-kadence-advancedgallery ul.kb-gallery-ul.kb-gallery-</span><span class="s">type-masonry</span></b></div>
<div class="ln" style="top:473.35px"><i>-</i><b><span class="p">    display</span><span class="w">: </span><span class="v">flex</span><span class="w">;</span></b></div>
<div class="ln" style="top:490.15px"><i>-</i><b><span class="p">    flex-wrap</span><span class="w">: </span><span class="v">wrap</span><span class="w">;</span></b></div>
<div class="gd" style="top:19.8px;height:16.8px"></div>
<div class="gd" style="top:87.0px;height:16.8px"></div>
<div class="gd" style="top:154.2px;height:16.8px"></div>
<div class="gd" style="top:221.3px;height:16.8px"></div>
<div class="gd" style="top:288.6px;height:33.6px"></div>
<div class="gd" style="top:372.6px;height:50.4px"></div>
<div class="gd" style="top:473.4px;height:33.6px"></div>
</div>
<div class="abs" style="left:390px;top:343px;font:23px/32px 'DejaVu Sans',sans-serif;letter-spacing:1.05px;color:#209c47;-webkit-text-stroke:0.55px #209c47;white-space:nowrap">https://uknew.co</div>
<div class="abs" style="left:980px;top:191px;width:11px;height:491px;background:#2c2c2c"></div>
<svg class="abs" style="left:983px;top:196px" width="9" height="6" viewBox="0 0 9 6"><path d="M0 6 H9 L4.5 0 Z" fill="#a6a6a6"/></svg>
<svg class="abs" style="left:983px;top:670px" width="9" height="6" viewBox="0 0 9 6"><path d="M0 0 H9 L4.5 6 Z" fill="#a6a6a6"/></svg>
<div class="abs" style="left:983px;top:208.7px;width:11px;height:17.6px;border-radius:5.5px;background:#9f9f9f"></div>
<div class="abs" style="left:205px;top:682px;width:786px;height:14px;background:#2c2c2c"></div>
<svg class="abs" style="left:209px;top:684px" width="8" height="9" viewBox="0 0 8 9"><path d="M8 0 V9 L0 4.5 Z" fill="#a6a6a6"/></svg>
<svg class="abs" style="left:968px;top:684px" width="8" height="9" viewBox="0 0 8 9"><path d="M0 0 V9 L8 4.5 Z" fill="#a6a6a6"/></svg>
<div class="abs" style="left:223px;top:683.5px;width:560px;height:10px;border-radius:5px;background:#9f9f9f"></div>
<div class="abs" style="left:5px;top:696px;width:986px;height:27px;background:#282828;border-top:1px solid #5c5c5c"></div>
<div class="sep" style="left:204px;top:696px;height:27px"></div>
<div class="abs ko" style="left:15.5px;top:702px;color:#d0d0d0">요청<span class="n"> 33</span>건</div>
<div class="sep" style="left:78px;top:702px;height:16px"></div>
<div class="abs ko" style="left:88px;top:702px;color:#d0d0d0"><span class="n">1.1 MB </span>전송됨</div>
<div class="sep" style="left:175px;top:702px;height:16px"></div>
<div class="abs ko" style="left:185.5px;top:702px;width:14.6px;overflow:hidden;color:#d0d0d0"><span style="letter-spacing:-0.6px">1.5 kB</span></div>
<svg class="abs" style="left:211.3px;top:703.6px" width="19.6" height="13.1" viewBox="0 0 18 12"><path d="M7 1 Q4.2 1 4.2 3.2 V4.2 Q4.2 6 1.8 6 Q4.2 6 4.2 7.8 V8.8 Q4.2 11 7 11 M11.1 1 Q13.9 1 13.9 3.2 V4.2 Q13.9 6 16.3 6 Q13.9 6 13.9 7.8 V8.8 Q13.9 11 11.1 11" fill="none" stroke="#7cacf8" stroke-width="2"/></svg>
</body></html>
